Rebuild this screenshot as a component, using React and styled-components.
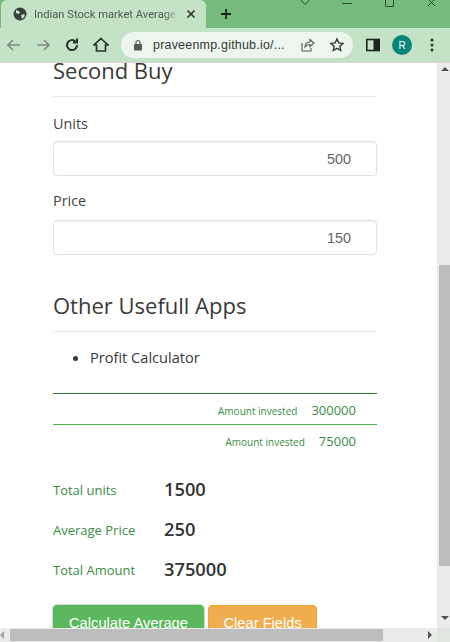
import React from "react";
import styled, { createGlobalStyle } from "styled-components";

const Global = createGlobalStyle`
  html, body { margin: 0; padding: 0; overflow: hidden; background: #fff; }
  * { box-sizing: border-box; }
`;

const Win = styled.div`
  position: relative;
  width: 450px;
  height: 642px;
  overflow: hidden;
  display: flex;
  flex-direction: column;
  font-family: "Open Sans", sans-serif;
  background: #fff;
`;

const TabStrip = styled.div`
  height: 28px;
  flex: none;
  background: #75bb7c;
  display: flex;
  padding-left: 1px;
  position: relative;
`;

const Tab = styled.div`
  width: 205px;
  height: 28px;
  background: #c3e2c6;
  border-radius: 6px 6px 0 0;
  display: flex;
  align-items: center;
  padding-left: 12px;
  font: 11.2px Roboto, sans-serif;
  color: #4f5c54;
  white-space: nowrap;
`;

const TabTitle = styled.span`
  width: 148px;
  margin-left: 7px;
  margin-right: 4px;
  overflow: hidden;
  mask-image: linear-gradient(to right, #000 88%, transparent 98%);
`;

const Toolbar = styled.div`
  height: 34px;
  flex: none;
  background: #c3e2c6;
  display: flex;
  align-items: center;
  padding-left: 6px;
`;

const ToolIcon = styled.div`
  width: 16px;
  height: 16px;
  margin-right: ${(p) => p.$gap}px;
  display: flex;
`;

const Omni = styled.div`
  width: 232px;
  height: 26px;
  border-radius: 13px;
  background: #edf6ee;
  display: flex;
  align-items: center;
  padding-left: 12px;
  margin-left: 12px;
  margin-right: 13px;
  font: 12.5px "Liberation Sans", sans-serif;
  color: #303a33;
`;

const Url = styled.span`
  margin-left: 10px;
  width: 146px;
  letter-spacing: 0.2px;
  white-space: nowrap;
`;

const Avatar = styled.div`
  width: 20px;
  height: 20px;
  border-radius: 50%;
  background: #0c8579;
  color: #fff;
  font: 10px "Liberation Sans", sans-serif;
  display: flex;
  align-items: center;
  justify-content: center;
  margin-left: 12px;
  margin-right: 18px;
`;

const Viewport = styled.div`
  flex: 1;
  min-height: 0;
  display: flex;
  border-top: 1px solid #d4d8d4;
`;

const Page = styled.div`
  width: 437px;
  overflow: hidden;
  padding: 0 60px 0 53px;
`;

const Section = styled.h2`
  margin: ${(p) => p.$top}px 0 0;
  font-size: 22px;
  font-weight: 400;
  color: #3a3a3a;
  line-height: 26px;
  padding-bottom: 13px;
  border-bottom: 1px solid #e8e8e8;
`;

const Label = styled.div`
  font-size: 14.4px;
  color: #444;
  line-height: 19px;
  margin-top: ${(p) => p.$top}px;
  margin-bottom: ${(p) => p.$bottom}px;
`;

const Field = styled.div`
  height: 35px;
  border: 1px solid #e2e2e2;
  border-radius: 4px;
  box-shadow: inset 0 1px 1px rgba(0, 0, 0, 0.04), 0 0 1px rgba(0, 0, 0, 0.12);
  font: 14.4px "Liberation Sans", sans-serif;
  color: #666;
  display: flex;
  align-items: center;
  justify-content: flex-end;
  padding-right: 25px;
`;

const LinkList = styled.ul`
  margin: 15px 0 0;
  padding: 0 0 0 37px;
  font-size: 14.6px;
  line-height: 20px;
  color: #3a3a3a;
`;

const Rule = styled.div`
  height: 1px;
  background: ${(p) => p.$color};
  margin-top: ${(p) => p.$top}px;
`;

const Invested = styled.div`
  display: flex;
  justify-content: flex-end;
  align-items: center;
  height: 30px;
  padding: 2px 21px 0 0;
  color: #3d8b45;
`;

const SmallLabel = styled.span`
  font-size: 10px;
  margin-right: 14px;
  padding-top: 2px;
`;

const SmallValue = styled.span`
  font-size: 13px;
`;

const Stat = styled.div`
  display: flex;
  align-items: center;
  height: 40px;
  margin-top: ${(p) => p.$top || 0}px;
`;

const StatLabel = styled.span`
  width: 111px;
  font-size: 13px;
  color: #3d8b45;
`;

const StatValue = styled.span`
  font-size: 18.3px;
  font-weight: 600;
  color: #333;
  padding-bottom: 4px;
`;

const Buttons = styled.div`
  display: flex;
  gap: 4px;
  margin-top: 15px;
`;

const Button = styled.div`
  height: 36px;
  padding: 0 ${(p) => p.$pad}px;
  display: flex;
  align-items: center;
  background: ${(p) => p.$bg};
  color: #fff;
  border-radius: 4px;
  border: 1px solid ${(p) => p.$edge};
  box-shadow: ${(p) => (p.$focused ? "0 0 0 1px #c9e4cb" : "none")};
  font: 14.7px "Liberation Sans", sans-serif;
  white-space: nowrap;
`;

const VScroll = styled.div`
  width: 13px;
  background: #ebebeb;
  position: relative;
`;

const VThumb = styled.div`
  position: absolute;
  left: 2px;
  right: 0;
  top: 202px;
  height: 301px;
  background: #bdbdbd;
`;

const HScroll = styled.div`
  position: absolute;
  left: 0;
  bottom: 0;
  width: 437px;
  height: 14px;
  background: #ebebeb;
`;

const HThumb = styled.div`
  position: absolute;
  left: 10px;
  top: 1px;
  height: 12px;
  width: 373px;
  background: #bdbdbd;
`;

const Corner = styled.div`
  position: absolute;
  right: 0;
  bottom: 0;
  width: 13px;
  height: 14px;
  background: #dfe6df;
`;

const Caret = styled.div`
  position: absolute;
  width: 0;
  height: 0;
  ${(p) => p.$place}
`;

const WinGlyph = styled.div`
  position: absolute;
  top: 0;
  display: flex;
  color: #2f4a33;
  ${(p) => p.$place}
`;

const Stroke = ({ children, w = 2, c = "#5c6b60" }) => (
  <svg width="16" height="16" viewBox="0 0 16 16" fill="none" stroke={c} strokeWidth={w}>
    {children}
  </svg>
);

export default function App() {
  return (
    <Win>
      <Global />
      <TabStrip>
        <Tab>
          <svg width="14" height="14" viewBox="0 0 14 14">
            <circle cx="7" cy="7" r="6.5" fill="#3a3f3c" />
            <path d="M3 3l3 1 1 2-2 1-2-1zM8 8l3-1 1 2-3 3z" fill="#c3e2c6" />
          </svg>
          <TabTitle>Indian Stock market Average Calculator</TabTitle>
          <svg width="10" height="10" viewBox="0 0 10 10" stroke="#2b332d" strokeWidth="1.6">
            <path d="M1.500 1.500l7 7M8.500 1.500l-7 7" />
          </svg>
        </Tab>
        <svg width="14" height="14" viewBox="0 0 14 14" stroke="#1c241e" strokeWidth="1.8" style={{ margin: "7px 0 0 13px" }}>
          <path d="M7 2v10M2 7h10" />
        </svg>
        <WinGlyph $place="left: 299px;">
          <svg width="12" height="6" viewBox="0 0 12 6" fill="none" stroke="currentColor"><path d="M1 -1l5 5.500 5-5.500" /></svg>
        </WinGlyph>
        <WinGlyph $place="left: 342px;">
          <svg width="10" height="8" viewBox="0 0 10 8" stroke="currentColor"><path d="M0 3.500h10" /></svg>
        </WinGlyph>
        <WinGlyph $place="left: 385px;">
          <svg width="9" height="8" viewBox="0 0 9 8" fill="none" stroke="currentColor"><path d="M.5 0v6.500h8V0" /></svg>
        </WinGlyph>
        <WinGlyph $place="left: 427px;">
          <svg width="9" height="8" viewBox="0 0 9 8" fill="none" stroke="currentColor"><path d="M1 -1l7 7M8 -1l-7 7" /></svg>
        </WinGlyph>
      </TabStrip>
      <Toolbar>
        <ToolIcon $gap={13}>
          <Stroke c="#7b8a7f" w={1.6}><path d="M14 8H2M7 3L2 8l5 5" /></Stroke>
        </ToolIcon>
        <ToolIcon $gap={13}>
          <Stroke c="#7b8a7f" w={1.6}><path d="M2 8h12M9 3l5 5-5 5" /></Stroke>
        </ToolIcon>
        <ToolIcon $gap={13}>
          <Stroke c="#2a322c" w={2}><path d="M13 8a5 5 0 1 1-1.600-3.600M13 1.500v4h-4" /></Stroke>
        </ToolIcon>
        <ToolIcon $gap={0}>
          <Stroke c="#2a322c" w={1.7}><path d="M8 1.500L15 8h-2.500v6h-9V8H1z" /></Stroke>
        </ToolIcon>
        <Omni>
          <svg width="10" height="12" viewBox="0 0 10 12">
            <rect x="1" y="5" width="8" height="6.5" rx="1" fill="#525c55" />
            <path d="M3 5V3.500a2 2 0 0 1 4 0V5" fill="none" stroke="#525c55" strokeWidth="1.2" />
          </svg>
          <Url>praveenmp.github.io/...</Url>
          <svg width="16" height="16" viewBox="0 0 16 16" fill="none" stroke="#4e5a52" strokeWidth="1.1">
            <path d="M3 6v8h9v-3M6 10c0-3 2-5 5-5V2.500L15 6l-4 3.500V7.500c-2 0-4 1-5 2.500z" />
          </svg>
          <svg width="16" height="16" viewBox="0 0 16 16" fill="none" stroke="#2f3832" strokeWidth="1.4" style={{ marginLeft: 14 }}>
            <path d="M8 2l1.800 3.900 4.200.5-3.100 2.900.8 4.200L8 11.400 4.300 13.500l.8-4.200L2 6.400l4.200-.5z" />
          </svg>
        </Omni>
        <svg width="14" height="14" viewBox="0 0 14 14">
          <rect x="0.800" y="1.500" width="12.400" height="11" fill="none" stroke="#1d2420" strokeWidth="1.600" />
          <rect x="7.500" y="1.500" width="5.500" height="11" fill="#1d2420" />
        </svg>
        <Avatar>R</Avatar>
        <svg width="4" height="14" viewBox="0 0 4 14" fill="#2b332d">
          <circle cx="2" cy="2" r="1.500" />
          <circle cx="2" cy="7" r="1.500" />
          <circle cx="2" cy="12" r="1.500" />
        </svg>
      </Toolbar>
      <Viewport>
        <Page>
          <Section $top={-6}>Second Buy</Section>
          <Label $top={17} $bottom={8}>Units</Label>
          <Field>500</Field>
          <Label $top={15} $bottom={10}>Price</Label>
          <Field>150</Field>
          <Section $top={37}>Other Usefull Apps</Section>
          <LinkList>
            <li>Profit Calculator</li>
          </LinkList>
          <Rule $color="#2e7d32" $top={26} />
          <Invested>
            <SmallLabel>Amount invested</SmallLabel>
            <SmallValue>300000</SmallValue>
          </Invested>
          <Rule $color="#4caf50" $top={0} />
          <Invested>
            <SmallLabel>Amount invested</SmallLabel>
            <SmallValue>75000</SmallValue>
          </Invested>
          <Stat $top={15}>
            <StatLabel>Total units</StatLabel>
            <StatValue>1500</StatValue>
          </Stat>
          <Stat>
            <StatLabel>Average Price</StatLabel>
            <StatValue>250</StatValue>
          </Stat>
          <Stat>
            <StatLabel>Total Amount</StatLabel>
            <StatValue>375000</StatValue>
          </Stat>
          <Buttons>
            <Button $bg="#5cb85c" $edge="#5cb85c" $pad={15} $focused>Calculate Average</Button>
            <Button $bg="#f0ad4e" $edge="#eea236" $pad={14.5}>Clear Fields</Button>
          </Buttons>
        </Page>
        <VScroll>
          <VThumb />
          <Caret $place="left: 4px; top: 4px; border-left: 4px solid transparent; border-right: 4px solid transparent; border-bottom: 4px solid #505050;" />
          <Caret $place="left: 4px; top: 553px; border-left: 4px solid transparent; border-right: 4px solid transparent; border-top: 4px solid #505050;" />
        </VScroll>
      </Viewport>
      <HScroll>
        <HThumb />
        <Caret $place="left: 428px; top: 3px; border-top: 4px solid transparent; border-bottom: 4px solid transparent; border-left: 4px solid #505050;" />
        <Caret $place="left: 0; top: 3px; border-top: 4px solid transparent; border-bottom: 4px solid transparent; border-right: 4px solid #a3a3a3;" />
      </HScroll>
      <Corner />
    </Win>
  );
}
